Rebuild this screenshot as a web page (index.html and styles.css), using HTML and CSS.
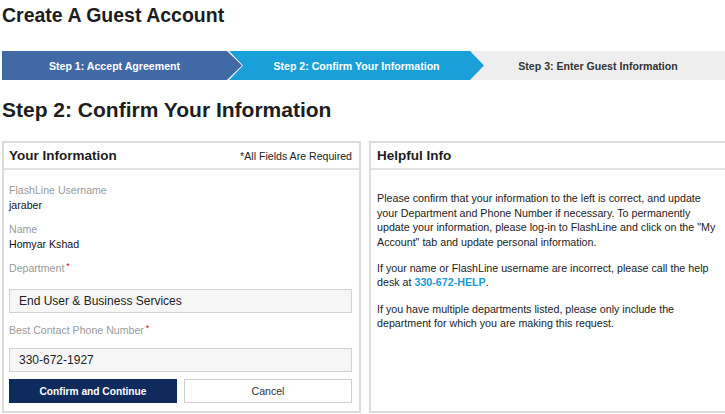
FILE: index.html
```html
<!DOCTYPE html>
<html lang="en">
<head>
    <meta charset="UTF-8">
    <meta name="viewport" content="width=device-width, initial-scale=1.0">
    <title>Create A Guest Account</title>
    <link rel="stylesheet" href="styles.css">
</head>
<body>
    <div class="page">
        <h1 class="page-title">Create A Guest Account</h1>

        <ol class="steps">
            <li class="step step-done">Step 1: Accept Agreement</li>
            <li class="step step-current">Step 2: Confirm Your Information</li>
            <li class="step step-next">Step 3: Enter Guest Information</li>
        </ol>

        <h2 class="section-title">Step 2: Confirm Your Information</h2>

        <div class="panels">
            <form class="panel panel-form">
                <div class="panel-head">
                    <h3>Your Information</h3>
                    <span class="note">*All Fields Are Required</span>
                </div>
                <div class="panel-body">
                    <div class="field">
                        <div class="label">FlashLine Username</div>
                        <div class="value">jaraber</div>
                    </div>
                    <div class="field">
                        <div class="label">Name</div>
                        <div class="value">Homyar Kshad</div>
                    </div>
                    <label class="label label-input" for="dept">Department<span class="req">*</span></label>
                    <input id="dept" class="input" type="text" value="End User &amp; Business Services">
                    <label class="label label-input label-phone" for="phone">Best Contact Phone Number<span class="req">*</span></label>
                    <input id="phone" class="input" type="text" value="330-672-1927">
                    <div class="actions">
                        <button type="button" class="btn btn-primary">Confirm and Continue</button>
                        <button type="button" class="btn">Cancel</button>
                    </div>
                </div>
            </form>

            <section class="panel panel-info">
                <div class="panel-head">
                    <h3>Helpful Info</h3>
                </div>
                <div class="panel-body">
                    <p>Please confirm that your information to the left is correct, and update your Department and Phone Number if necessary. To permanently update your information, please log-in to FlashLine and click on the "My Account" tab and update personal information.</p>
                    <p>If your name or FlashLine username are incorrect, please call the help desk at <a href="#" class="help-link">330-672-HELP</a>.</p>
                    <p>If you have multiple departments listed, please only include the department for which you are making this request.</p>
                </div>
            </section>
        </div>
    </div>
</body>
</html>
```

FILE: styles.css
```css
body { margin: 0; overflow: hidden; background: #fff; color: #1d1d1d; font-family: "Liberation Sans", Arial, Helvetica, sans-serif; }
.page { width: 728px; margin-left: 2px; }

.page-title { margin: 0; padding-top: 3px; font-size: 19.5px; line-height: 24px; font-weight: bold; }

/* Step bar */
.steps {
    display: flex;
    list-style: none;
    margin: 24px 0 0;
    padding: 0;
    height: 29px;
}

.step {
    display: flex;
    align-items: center;
    justify-content: center;
    box-sizing: border-box;
    font-size: 10.6px;
    font-weight: bold;
    white-space: nowrap;
}

.step-done {
    width: 240px;
    padding-right: 15px;
    background: #4169a6;
    color: #fff;
    z-index: 3;
    clip-path: polygon(0 0, calc(100% - 15px) 0, 100% 50%, calc(100% - 15px) 100%, 0 100%);
}

.step-current {
    width: 255px;
    margin-left: -13px;
    padding: 0 14px;
    background: #1b9fd8;
    color: #fff;
    z-index: 2;
    clip-path: polygon(0 0, calc(100% - 14px) 0, 100% 50%, calc(100% - 14px) 100%, 0 100%, 14px 50%);
}

.step-next {
    flex: 1;
    margin-left: -14px;
    padding-right: 4px;
    background: #eeeeee;
    color: #333;
    z-index: 1;
}

.section-title { margin: 17px 0 18px; font-size: 21px; line-height: 26px; font-weight: bold; }

/* Panels */
.panels {
    display: grid;
    grid-template-columns: 359px 361px;
    gap: 8px;
}

.panel {
    margin: 0;
    border: 2px solid #dcdcdc;
    background: #fff;
}

.panel-head {
    display: flex;
    align-items: center;
    justify-content: space-between;
    height: 25px;
    padding: 0 7px 0 5px;
    border-bottom: 2px solid #e2e2e2;
}

.panel-head h3 { margin: 0; font-size: 13.5px; font-weight: bold; color: #1d1d1d; }
.note { font-size: 10.6px; color: #222; }

.panel-form .panel-body { padding: 13px 7px 8px 5px; }

.field { margin-bottom: 9px; }
.label { display: block; font-size: 10.6px; line-height: 15px; color: #9a9a9a; }
.value { font-size: 10.6px; line-height: 15px; color: #111; }
.label-input { margin-bottom: 13px; }
.label-phone { margin-top: 10px; margin-bottom: 10px; }
.req { color: #d9001b; font-size: 9px; line-height: 0; vertical-align: 3px; margin-left: 2px; }

.input {
    display: block;
    width: 100%;
    height: 24px;
    box-sizing: border-box;
    margin: 0;
    padding: 0 9px;
    border: 1px solid #d2d2d2;
    border-radius: 0;
    background: #f6f6f6;
    font-family: inherit;
    font-size: 12px;
    color: #222;
}

.actions {
    display: grid;
    grid-template-columns: 1fr 1fr;
    gap: 7px;
    margin-top: 7px;
}

.btn {
    height: 24px;
    margin: 0;
    padding: 0;
    border: 1px solid #cfcfcf;
    border-radius: 0;
    background: #fff;
    font-family: inherit;
    font-size: 10.6px;
    color: #333;
}

.btn-primary {
    border-color: #0f2b5e;
    background: #0f2b5e;
    color: #fff;
    font-size: 10.2px;
    font-weight: bold;
}

.panel-info .panel-head { padding: 0 6px; }
.panel-info .panel-body { padding: 21px 4px 0 6px; }
.panel-info p { margin: 0 0 11.5px; font-size: 10.7px; line-height: 14.6px; color: #222; }
.help-link { color: #1a9ad7; font-weight: bold; text-decoration: none; }
```
